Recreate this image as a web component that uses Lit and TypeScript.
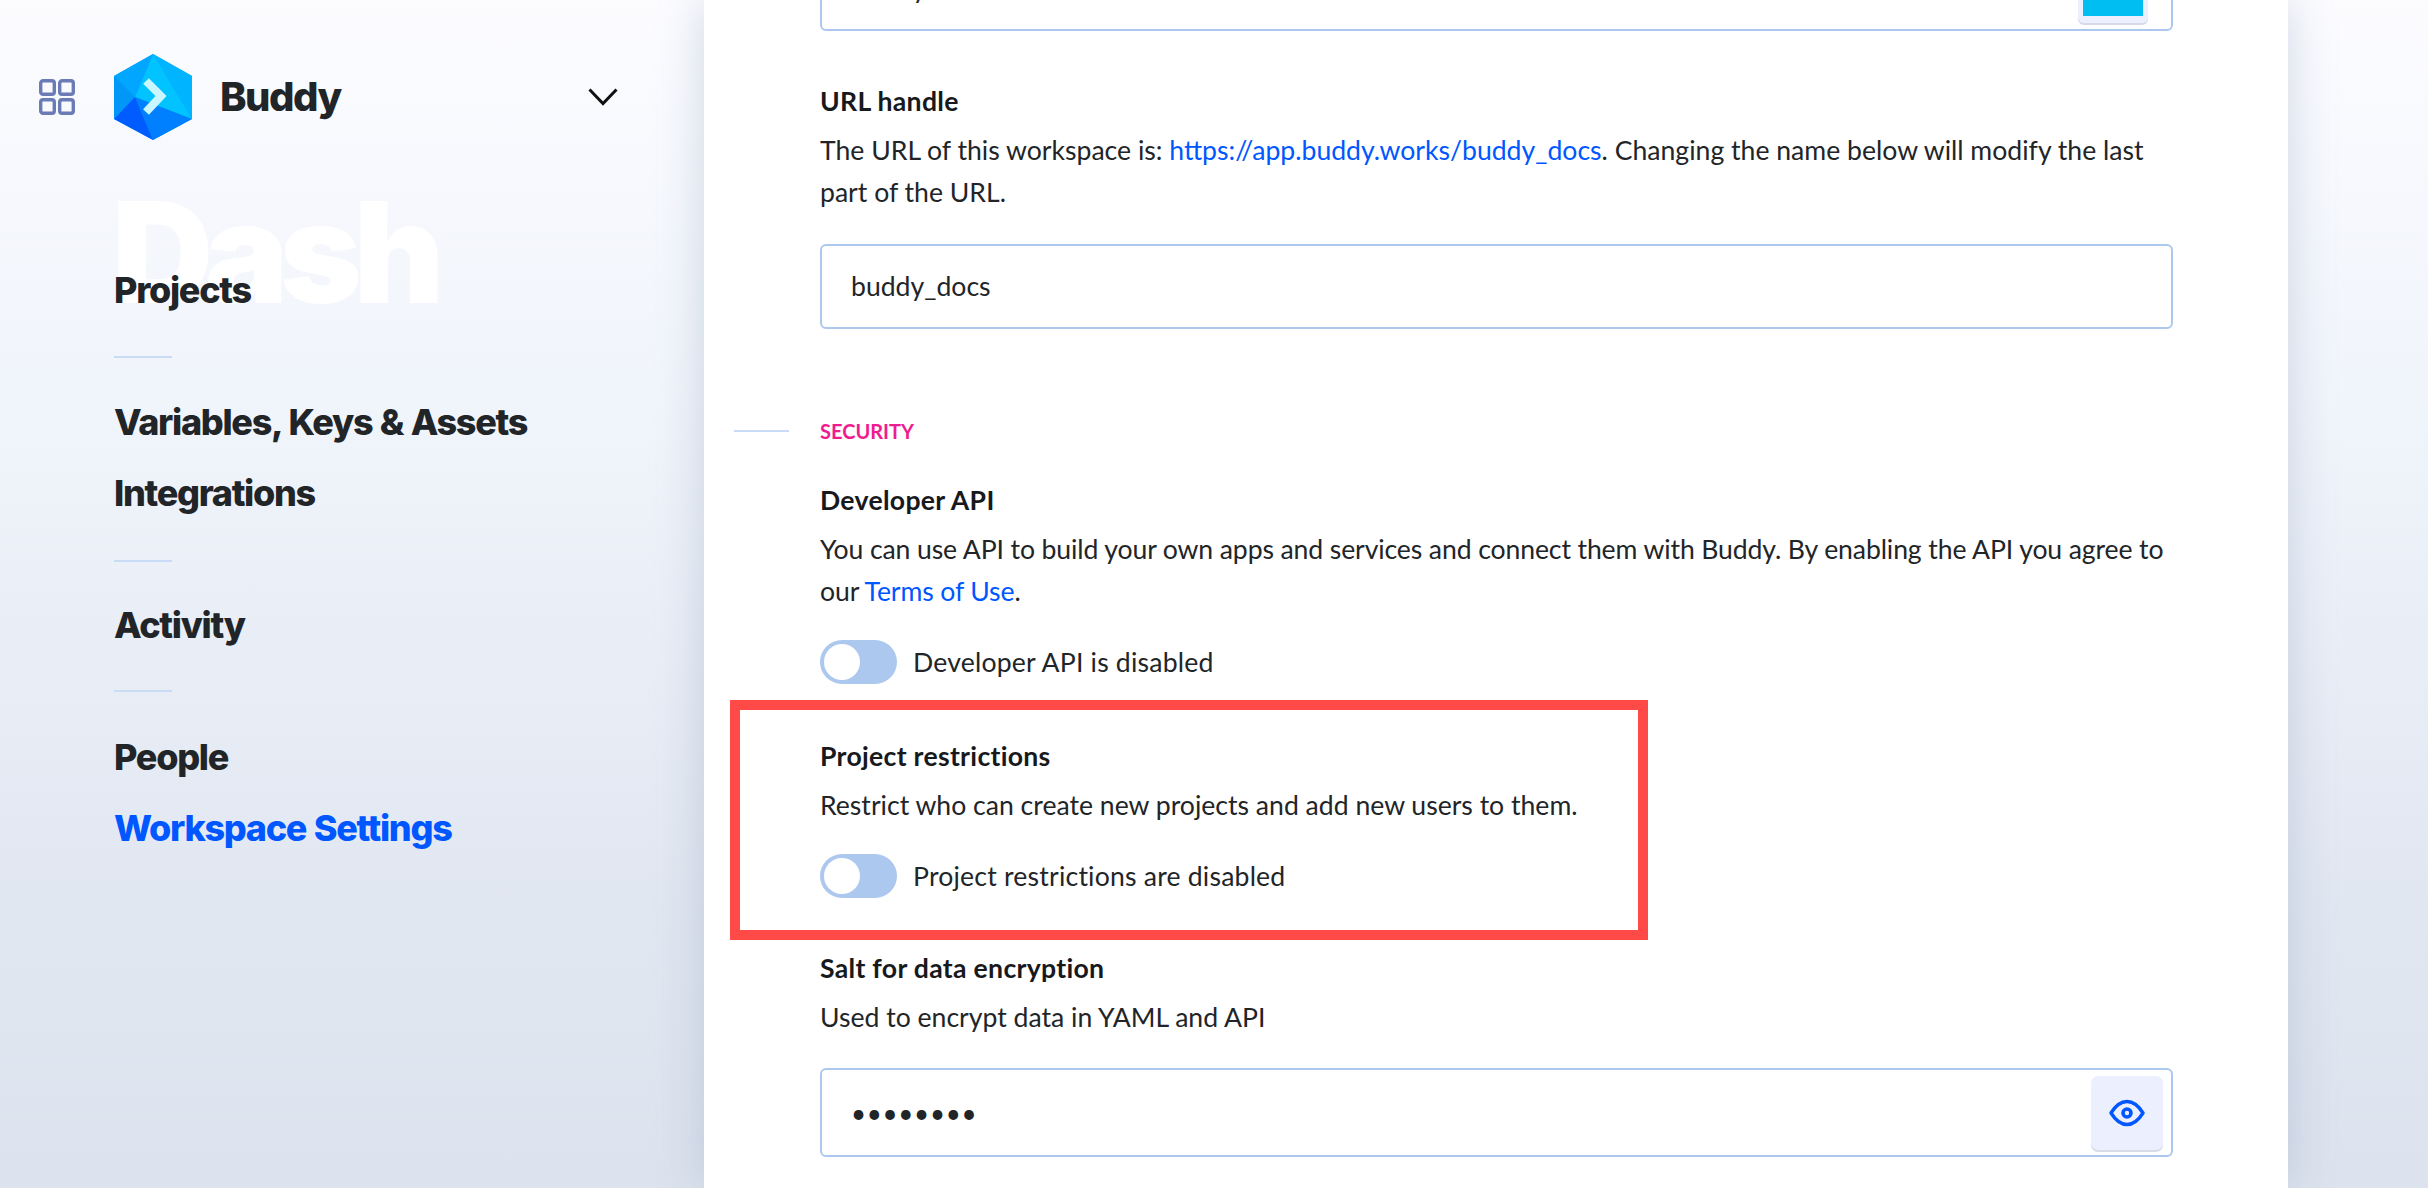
import { LitElement, html, css } from "lit";
import { customElement } from "lit/decorators.js";

@customElement("app-root")
export class AppRoot extends LitElement {
  static styles = css`
    :host { display: block; height: 1188px; overflow: hidden; font-family: "Lato", sans-serif; color: #222528; background: linear-gradient(180deg, #fcfcff 0%, #f0f4fb 35%, #e1e7f1 76%, #dce3ee 100%); }
    .page { display: flex; height: 1188px; overflow: hidden; }
    .side { position: relative; width: 704px; flex: none; box-sizing: border-box; padding: 54px 0 0 39px; }
    .brand { display: flex; align-items: center; height: 86px; }
    .grid { width: 36px; height: 36px; display: block; }
    .logo { width: 78px; height: 86px; margin-left: 39px; display: block; }
    .bname { font: 850 40px/1 "Inter", sans-serif; letter-spacing: -1.5px; color: #222528; margin-left: 28px; flex: 1; }
    .chev { width: 30px; height: 18px; margin-right: 86px; display: block; }
    .dash { position: absolute; left: 112px; top: 172px; font: 900 140px/1.15 "Inter", sans-serif; letter-spacing: -8.5px; color: #fff; }
    nav { position: relative; margin: 114px 0 0 75px; }
    .item { font: 850 36px/72px "Inter", sans-serif; letter-spacing: -1.3px; word-spacing: 1px; height: 71px; color: #222528; white-space: nowrap; }
    .item.on { color: #0057ff; }
    .rule { width: 58px; height: 2px; background: #c9dcf5; }
    .r1 { margin: 31px 0 28px; }
    .r2 { margin: 32px 0 27px; }
    .r3 { margin: 30px 0 29px; }
    .card { position: relative; width: 1584px; flex: none; background: #fff; box-sizing: border-box; padding: 0 115px 0 116px; box-shadow: 0 0 44px rgba(120, 140, 175, .32); }
    .input { box-sizing: border-box; border: 2px solid #adc8ee; border-radius: 6px; background: #fff; display: flex; align-items: center; justify-content: space-between; padding: 0 8px 0 29px; font-size: 26.6px; }
    .i1 { margin-top: -54px; height: 85px; padding-right: 23px; align-items: flex-start; }
    .i1 span { line-height: 81px; }
    .swatch { box-sizing: border-box; width: 70px; height: 68px; margin-top: 7px; padding: 6px 5px 7px; background: #ecf0fe; border-radius: 6px; box-shadow: 0 2px 0 #d8dbe6; }
    .swatch i { display: block; height: 100%; background: #00bdf2; }
    .i2 { height: 85px; margin-top: 31px; }
    .i2 span { position: relative; top: -1px; }
    .i3 { height: 89px; margin-top: 30px; }
    .dots { font: 400 26px/1 "Lato", sans-serif; letter-spacing: 0.7px; }
    .eye { width: 72px; height: 74px; background: #ecf0fe; border-radius: 7px; box-shadow: 0 2px 0 #d8dbe6; display: flex; align-items: center; justify-content: center; }
    .eye svg { width: 36px; height: 28px; display: block; }
    h3 { margin: 0 0 8px; font: 700 26.6px/40px "Lato", sans-serif; letter-spacing: .3px; color: #17191c; }
    p { margin: 0; font-size: 26.6px; line-height: 42px; color: #222528; }
    p.tight { letter-spacing: -.12px; }
    a { color: #0057ff; text-decoration: none; }
    .h-url { margin-top: 50px; }
    .sec { display: flex; align-items: center; margin: 84px 0 0 -86px; height: 36px; }
    .sec .rule { width: 55px; margin-right: 31px; }
    .sec span { font-size: 20px; font-weight: 700; color: #ef1c8f; line-height: 1; }
    .h-api { margin-top: 31px; }
    .tog { display: flex; align-items: center; height: 44px; margin-top: 28px; font-size: 26.6px; letter-spacing: .2px; }
    .sw { box-sizing: border-box; width: 77px; height: 44px; border-radius: 22px; background: #adc8ee; padding: 4px; margin-right: 16px; }
    .sw i { display: block; width: 36px; height: 36px; border-radius: 50%; background: #fff; }
    .h-res { margin-top: 52px; }
    .h-salt { margin-top: 50px; }
    .mark { position: absolute; left: 26px; top: 700px; width: 918px; height: 240px; box-sizing: border-box; border: 10px solid #ff4a47; }
  `;

  render() {
    return html`<div class="page">
      <aside class="side">
        <div class="dash">Dash</div>
        <div class="brand">
          <svg class="grid" viewBox="0 0 36 36" fill="none" stroke="#6b7bb5" stroke-width="3.4">
            <rect x="1.7" y="1.7" width="13.6" height="13.6" rx="2.4"></rect>
            <rect x="20.7" y="1.7" width="13.6" height="13.6" rx="2.4"></rect>
            <rect x="1.7" y="20.7" width="13.6" height="13.6" rx="2.4"></rect>
            <rect x="20.7" y="20.7" width="13.6" height="13.6" rx="2.4"></rect>
          </svg>
          <svg class="logo" viewBox="0 0 78 86">
            <polygon points="39,0 78,22 78,65 39,86 0,65 0,22" fill="#00a8ff"></polygon>
            <polygon points="39,0 78,22 78,65" fill="#00b4ff"></polygon>
            <polygon points="39,0 78,65 21,43" fill="#00c3ff"></polygon>
            <polygon points="39,0 0,22 21,43" fill="#00a6ff"></polygon>
            <polygon points="0,22 0,65 21,43" fill="#0097f8"></polygon>
            <polygon points="21,43 78,65 39,86" fill="#0080ff"></polygon>
            <polygon points="21,43 0,65 39,86" fill="#005cff"></polygon>
            <polyline points="32,27 47,42 32,58" fill="none" stroke="#c9f6ff" stroke-width="8"></polyline>
          </svg>
          <div class="bname">Buddy</div>
          <svg class="chev" viewBox="0 0 30 18" fill="none" stroke="#111" stroke-width="3"><polyline points="1.5,1.5 15,15.5 28.5,1.5"></polyline></svg>
        </div>
        <nav>
          <div class="item">Projects</div>
          <div class="rule r1"></div>
          <div class="item">Variables, Keys &amp; Assets</div>
          <div class="item">Integrations</div>
          <div class="rule r2"></div>
          <div class="item">Activity</div>
          <div class="rule r3"></div>
          <div class="item">People</div>
          <div class="item on">Workspace Settings</div>
        </nav>
      </aside>
      <main class="card">
        <div class="input i1"><span>Buddy</span><div class="swatch"><i></i></div></div>
        <h3 class="h-url">URL handle</h3>
        <p>The URL of this workspace is: <a>https://app.buddy.works/buddy_docs</a>. Changing the name below will modify the last part of the URL.</p>
        <div class="input i2"><span>buddy_docs</span></div>
        <div class="sec"><div class="rule"></div><span>SECURITY</span></div>
        <h3 class="h-api">Developer API</h3>
        <p class="tight">You can use API to build your own apps and services and connect them with Buddy. By enabling the API you agree to our <a>Terms of Use</a>.</p>
        <div class="tog"><div class="sw"><i></i></div>Developer API is disabled</div>
        <h3 class="h-res">Project restrictions</h3>
        <p>Restrict who can create new projects and add new users to them.</p>
        <div class="tog"><div class="sw"><i></i></div>Project restrictions are disabled</div>
        <h3 class="h-salt">Salt for data encryption</h3>
        <p>Used to encrypt data in YAML and API</p>
        <div class="input i3"><span class="dots">••••••••</span>
          <div class="eye"><svg viewBox="0 0 36 28" fill="none" stroke="#0057ff"><path stroke-width="3.4" stroke-linejoin="round" d="M2 14 C7 6 12 2.5 18 2.5 C24 2.5 29 6 34 14 C29 22 24 25.5 18 25.5 C12 25.5 7 22 2 14 Z"></path><circle cx="18" cy="14" r="4" stroke-width="3.6"></circle></svg></div>
        </div>
        <div class="mark"></div>
      </main>
    </div>`;
  }
}
